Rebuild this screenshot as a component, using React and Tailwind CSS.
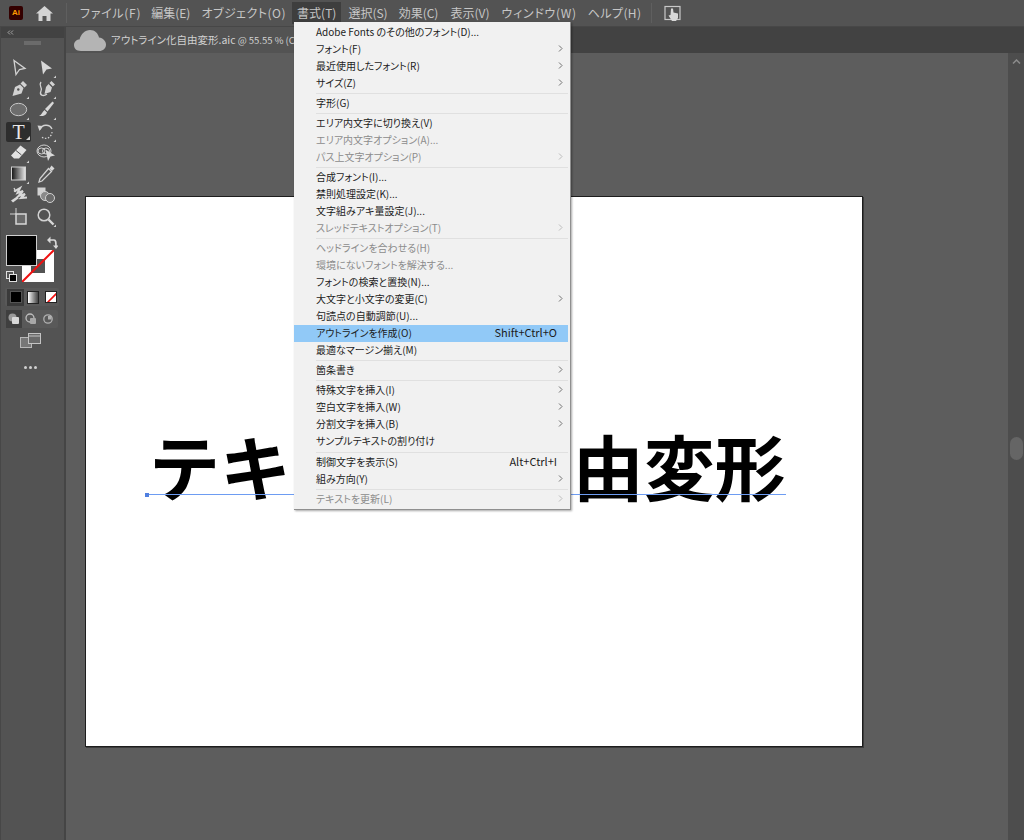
const FONT = '"Noto Sans CJK JP", "Noto Sans", sans-serif';

const topMenus = [
  ["ファイル(F)", "ml-[13px] tracking-[0.7px]"],
  ["編集(E)", "ml-[10px]"],
  ["オブジェクト(O)", "ml-[11px] tracking-[0.5px]"],
];
const topMenus2 = [
  ["選択(S)", "ml-[7px]"],
  ["効果(C)", "ml-[11px]"],
  ["表示(V)", "ml-[12px]"],
  ["ウィンドウ(W)", "ml-[12px] tracking-[0.7px]"],
  ["ヘルプ(H)", "ml-[11px] tracking-[0.4px]"],
];

const menu = [
  { t: "Adobe Fonts のその他のフォント(D)..." },
  { t: "フォント(F)", sub: 1 },
  { t: "最近使用したフォント(R)", sub: 1 },
  { t: "サイズ(Z)", sub: 1 },
  { sep: 1 },
  { t: "字形(G)" },
  { sep: 1 },
  { t: "エリア内文字に切り換え(V)" },
  { t: "エリア内文字オプション(A)...", off: 1 },
  { t: "パス上文字オプション(P)", off: 1, sub: 1 },
  { sep: 1 },
  { t: "合成フォント(I)..." },
  { t: "禁則処理設定(K)..." },
  { t: "文字組みアキ量設定(J)..." },
  { t: "スレッドテキストオプション(T)", off: 1, sub: 1 },
  { sep: 1 },
  { t: "ヘッドラインを合わせる(H)", off: 1 },
  { t: "環境にないフォントを解決する...", off: 1 },
  { t: "フォントの検索と置換(N)..." },
  { t: "大文字と小文字の変更(C)", sub: 1 },
  { t: "句読点の自動調節(U)..." },
  { t: "アウトラインを作成(O)", key: "Shift+Ctrl+O", hi: 1 },
  { t: "最適なマージン揃え(M)" },
  { sep: 1 },
  { t: "箇条書き", sub: 1 },
  { sep: 1 },
  { t: "特殊文字を挿入(I)", sub: 1 },
  { t: "空白文字を挿入(W)", sub: 1 },
  { t: "分割文字を挿入(B)", sub: 1 },
  { t: "サンプルテキストの割り付け" },
  { sep: 2 },
  { t: "制御文字を表示(S)", key: "Alt+Ctrl+I" },
  { t: "組み方向(Y)", sub: 1 },
  { sep: 1 },
  { t: "テキストを更新(L)", off: 1, sub: 1 },
];

function Corner() {
  return <path d="M20 17.5V20H17.5Z" fill="#d0d0d0" />;
}

const S = { stroke: "#d2d2d2", strokeWidth: 1.3, fill: "none" };

const tools = [
  <>
    <path d="M5 2.5 16 10.5 10.5 11.5 7 16.5Z" {...S} />
  </>,
  <>
    <path d="M5 2.5 16 10.5 10.5 11.5 7 16.5Z" fill="#d8d8d8" />
    <Corner />
  </>,
  <>
    <path d="M14 2 18 6 15.5 8.5 11.5 4.5Z M11 5.5 14.5 9 12.5 14.5 3.5 17 6 8Z" fill="#d2d2d2" />
    <circle cx="9.3" cy="10.5" r="1.2" fill="#535353" />
    <Corner />
  </>,
  <>
    <path d="M15.5 2 19 5.5 16.8 7.5 13.5 4Z M12.5 5 16 8.5 14.5 13 8.5 15 10 8Z" fill="#d2d2d2" />
    <path d="M5 3C2 7 7 8 5 12S7 18 11 15" {...S} />
    <Corner />
  </>,
  <>
    <ellipse cx="9.5" cy="9.5" rx="8.2" ry="6.2" fill="#6d6d6d" stroke="#c8c8c8" strokeWidth="1" />
    <Corner />
  </>,
  <>
    <path d="M16.5 1.5 18 3 11.5 11.5 9 9Z" fill="#d8d8d8" />
    <path d="M8.5 10 11 12.5C10 15.5 7 16.5 3 16 5.5 15 6 12 8.5 10Z" fill="#d8d8d8" />
    <Corner />
  </>,
  null,
  <>
    <path d="M4 7.5A6.5 6.5 0 0 1 16 7" {...S} />
    <path d="M16 10A6.5 6.5 0 0 1 5 14.5" stroke="#d2d2d2" strokeWidth="1.2" strokeDasharray="1.5 1.5" fill="none" />
    <path d="M1.5 3.5 7 4 3.5 9Z" fill="#d2d2d2" />
    <Corner />
  </>,
  <>
    <path d="M11.5 2.5 17.5 7 10 15.5 5 15.5 2 12.5Z" fill="#e2e2e2" />
    <path d="M7 7.5 12.5 12" stroke="#535353" strokeWidth="1" />
    <Corner />
  </>,
  <>
    <ellipse cx="8" cy="8" rx="7" ry="6" {...S} strokeWidth="1" />
    <ellipse cx="5.5" cy="8" rx="3.5" ry="3" {...S} strokeWidth="1" />
    <ellipse cx="10" cy="8" rx="3.5" ry="3" {...S} strokeWidth="1" />
    <path d="M9.5 6.5 19 12.5 14.5 13.5 12 18Z" fill="#d8d8d8" />
  </>,
  <>
    <defs>
      <linearGradient id="grd">
        <stop offset="0" stopColor="#111" />
        <stop offset="1" stopColor="#e8e8e8" />
      </linearGradient>
    </defs>
    <rect x="2.5" y="3" width="14" height="13" fill="url(#grd)" stroke="#d0d0d0" strokeWidth="1" />
    <Corner />
  </>,
  <>
    <path d="M15.5 1.5 18.5 4.5 16 7 13.5 4.5Z" fill="#d8d8d8" />
    <path d="M12.5 4.5 15.5 7.5 6 17 3 18 4 14.5Z" {...S} />
  </>,
  <>
    <path d="M5 6.5 11 3 8.5 8 14 6 9.5 11 16 9 12 13 18 12.5" stroke="#d8d8d8" strokeWidth="2" fill="none" />
    <path d="M2 15.5 8 11.5 10 13 4 17.5Z" fill="#d8d8d8" />
    <path d="M5 3 7 7" stroke="#d8d8d8" strokeWidth="1.2" />
  </>,
  <>
    <rect x="1.5" y="2.5" width="8" height="8" fill="#d2d2d2" />
    <circle cx="9" cy="11" r="4.5" fill="#8a8a8a" stroke="#d2d2d2" strokeWidth="1" />
    <circle cx="14" cy="13" r="4.5" fill="#6a6a6a" stroke="#d2d2d2" strokeWidth="1" />
  </>,
  <>
    <rect x="7" y="7" width="10" height="10" fill="#6a6a6a" stroke="#d8d8d8" strokeWidth="1.5" />
    <path d="M7 1V7H1" stroke="#d2d2d2" strokeWidth="1" fill="none" />
  </>,
  <>
    <circle cx="8" cy="8" r="5.8" {...S} strokeWidth="1.5" />
    <path d="M12.5 12.5 17.5 17.5" stroke="#d8d8d8" strokeWidth="2.4" />
    <Corner />
  </>,
];

function ToolIcon({ children }) {
  return (
    <svg width="20" height="20" viewBox="0 0 20 20" className="block">
      {children}
    </svg>
  );
}

function Toolbar() {
  return (
    <aside className="w-[66px] shrink-0 flex flex-col bg-[#535353] border-r-2 border-[#454545] border-l border-l-[#474747]">
      <div className="h-[11px] bg-[#424242] flex items-center pl-[6px]">
        <svg width="7" height="5" viewBox="0 0 7 5">
          <path d="M3 .5 1 2.5 3 4.5M6 .5 4 2.5 6 4.5" stroke="#bdbdbd" strokeWidth=".8" fill="none" />
        </svg>
      </div>
      <div className="h-[8px] mt-[3px] flex justify-center">
        <div className="w-[17px] h-[4px] bg-[#6b6b6b]" />
      </div>
      <div className="grid grid-cols-[27px_27px] auto-rows-[21.3px] mt-[8px] ml-[4px]">
        {tools.map((icon, i) =>
          icon ? (
            <div key={i} className="flex items-center justify-center">
              <ToolIcon>{icon}</ToolIcon>
            </div>
          ) : (
            <div key={i} className="relative flex items-center justify-center">
              <div className="w-[25px] h-[20px] bg-[#2d2d2d] rounded-[2px] flex items-center justify-center">
                <span className="text-[#e8e8e8] text-[20px] font-normal leading-none font-['Liberation_Serif',serif]">T</span>
                <svg width="4" height="4" viewBox="0 0 4 4" className="absolute right-[2px] bottom-[2px]">
                  <path d="M4 0V4H0Z" fill="#d0d0d0" />
                </svg>
              </div>
            </div>
          )
        )}
      </div>
      <div className="relative h-[50px] mt-[8px] ml-[5px] shrink-0">
        <svg width="12" height="14" viewBox="0 0 12 14" className="absolute left-[40px] top-[0px]">
          <path d="M2 5H8C10 5 10 7 10 12" stroke="#d8d8d8" strokeWidth="1.6" fill="none" />
          <path d="M4.5 1.5 1 5 4.5 8.5ZM7 10.5 10 14 12.5 10.5Z" fill="#d8d8d8" />
        </svg>
        <div className="absolute left-[16px] top-[15px] w-[32px] h-[32px] bg-white flex items-center justify-center">
          <div className="w-[14px] h-[14px] bg-[#535353]" />
          <svg width="32" height="32" viewBox="0 0 32 32" className="absolute inset-0">
            <path d="M0 32 32 0" stroke="#f01010" strokeWidth="2" />
          </svg>
        </div>
        <div className="absolute left-0 top-0 w-[31px] h-[31px] bg-black border border-[#cfcfcf]" />
        <svg width="12" height="12" viewBox="0 0 12 12" className="absolute left-0 top-[36px]">
          <rect x=".5" y=".5" width="7" height="7" fill="#555" stroke="#e0e0e0" />
          <rect x="3.5" y="3.5" width="7" height="7" fill="#000" stroke="#e0e0e0" />
        </svg>
      </div>
      <div className="flex items-center h-[18px] mt-[3px] ml-[4px] w-[54px] bg-[#595959] rounded-[2px]">
        <div className="w-[17px] h-[17px] ml-[2px] bg-[#3a3a3a] flex items-center justify-center">
          <div className="w-[12px] h-[12px] bg-black border border-[#555]" />
        </div>
        <div className="w-[12px] h-[13px] ml-[3px] border border-[#222] bg-gradient-to-r from-white to-[#444]" />
        <div className="w-[12px] h-[12px] ml-[6px] bg-white border border-[#222] relative overflow-hidden">
          <svg width="12" height="12" viewBox="0 0 12 12" className="absolute inset-0">
            <path d="M0 12 12 0" stroke="#f01010" strokeWidth="1.6" />
          </svg>
        </div>
      </div>
      <div className="flex items-center h-[18px] mt-[4px] ml-[5px] w-[52px] bg-[#595959] rounded-[2px]">
        <div className="w-[16px] h-[18px] bg-[#3f3f3f] flex items-center justify-center">
          <svg width="14" height="14" viewBox="0 0 14 14">
            <circle cx="5.5" cy="5.5" r="4" fill="#9a9a9a" />
            <rect x="5" y="5" width="7" height="7" rx="1" fill="#d8d8d8" />
          </svg>
        </div>
        <div className="w-[17px] flex justify-center">
          <svg width="14" height="14" viewBox="0 0 14 14">
            <circle cx="6" cy="6" r="4" fill="none" stroke="#bdbdbd" strokeWidth="1.3" />
            <rect x="6" y="6" width="6" height="6" rx="1" fill="#a8a8a8" />
          </svg>
        </div>
        <div className="w-[17px] flex justify-center">
          <svg width="12" height="12" viewBox="0 0 12 12">
            <circle cx="6" cy="6" r="4.2" fill="none" stroke="#b0b0b0" strokeWidth="1.3" />
            <rect x="6" y="3" width="3.5" height="3.5" fill="#b0b0b0" />
          </svg>
        </div>
      </div>
      <div className="flex justify-center mt-[5px] pr-[4px]">
        <svg width="21" height="15" viewBox="0 0 21 15">
          <rect x=".5" y="4.5" width="11" height="10" fill="#777" stroke="#b8b8b8" />
          <rect x="8.5" y=".5" width="12" height="10" fill="#6a6a6a" stroke="#c4c4c4" />
          <path d="M9 3H20" stroke="#c4c4c4" />
        </svg>
      </div>
      <div className="flex justify-center gap-[2px] mt-[18px] pr-[4px]">
        <span className="w-[3px] h-[3px] rounded-full bg-[#d0d0d0]" />
        <span className="w-[3px] h-[3px] rounded-full bg-[#d0d0d0]" />
        <span className="w-[3px] h-[3px] rounded-full bg-[#d0d0d0]" />
      </div>
    </aside>
  );
}

function Menu() {
  return (
    <div className="absolute left-[294px] top-[22px] w-[277px] h-[488px] pt-[2px] pr-[2px] bg-[#f1f1f1] border-r border-b border-[#8f8f8f] shadow-[1px_1px_2px_rgba(0,0,0,0.35)] z-10 [font-feature-settings:'palt']">
      {menu.map((m, i) =>
        m.sep ? (
          <div key={i} className={`ml-[22px] flex items-center ${m.sep === 2 ? "h-[4px]" : "h-[3px]"}`}>
            <div className="w-full h-px bg-[#e0e0e0]" />
          </div>
        ) : (
          <div
            key={i}
            className={`h-[17px] pb-[2px] flex items-center pl-[22px] pr-[11px] text-[10px] leading-none ${m.hi ? "bg-[#91c9f7]" : ""} ${m.off ? "text-[#8c8c8c]" : "text-[#1c1c1c]"}`}
          >
            <span className="flex-1 whitespace-nowrap">{m.t}</span>
            {m.key && <span className="whitespace-nowrap text-[11px]">{m.key}</span>}
            {m.sub && (
              <svg width="5" height="7" viewBox="0 0 5 7" className="mr-[-6px]">
                <path d="M1 .5 4 3.5 1 6.5" stroke={m.off ? "#bbbbbb" : "#707070"} strokeWidth="1" fill="none" />
              </svg>
            )}
          </div>
        )
      )}
    </div>
  );
}

export default function App() {
  return (
    <div className="relative w-[1024px] h-[840px] overflow-hidden flex flex-col bg-[#535353]" style={{ fontFamily: FONT }}>
      <header className="h-[27px] shrink-0 flex items-center bg-[#535353] border-b border-[#474747] text-[12px] text-[#c6c6c6] whitespace-nowrap [font-feature-settings:'palt']">
        <div className="ml-[9px] w-[14px] h-[14px] rounded-[2px] bg-[#330000] flex items-center justify-center text-[8px] font-bold text-[#ff9a00] leading-none font-['Liberation_Sans',sans-serif]">
          Ai
        </div>
        <svg width="17" height="15" viewBox="0 0 17 15" className="ml-[13px]">
          <path d="M8.5 0 17 7.5H14.5V15H10.5V10H6.5V15H2.5V7.5H0Z" fill="#d4d4d4" />
        </svg>
        <div className="w-px h-[20px] bg-[#5f5f5f] ml-[13px]" />
        {topMenus.map(([t, c]) => (
          <span key={t} className={c}>{t}</span>
        ))}
        <span className="ml-[6px] h-[22px] px-[5px] bg-[#3e3e3e] flex items-center">書式(T)</span>
        {topMenus2.map(([t, c]) => (
          <span key={t} className={c}>{t}</span>
        ))}
        <div className="w-px h-[20px] bg-[#5f5f5f] ml-[10px]" />
        <svg width="18" height="16" viewBox="0 0 18 16" className="ml-[12px]">
          <rect x="1" y="1.5" width="15" height="13" fill="none" stroke="#c8c8c8" strokeWidth="1.2" />
          <path d="M7 3.5 9 3.5 9.5 7.5 14 8.5 14 13 12 16H8L4.5 10.5 6.5 10Z" fill="#d8d8d8" />
        </svg>
      </header>
      <div className="flex-1 min-h-0 flex">
        <Toolbar />
        <div className="flex-1 min-w-0 flex flex-col">
          <div className="h-[26px] shrink-0 bg-[#424242] flex">
            <div className="w-[300px] flex items-center bg-[#535353] pl-[8px] text-[#d0d0d0] text-[10.5px] whitespace-nowrap overflow-hidden [font-feature-settings:'palt']">
              <svg width="32" height="21" viewBox="0 0 32 21" className="shrink-0">
                <path d="M7 21C2 21 0 18 0 15 0 11.5 3 9.5 5.5 9.5 7 4 11 0 16 0 21 0 24 3.5 25 7.5 29 8 32 11 32 14.5 32 18.5 29 21 25 21Z" fill="#b4b4b4" />
              </svg>
              <span className="ml-[5px]">
                アウトライン化自由変形.aic<span className="text-[9.5px]"> @ 55.55 % (CMYK/プレビュー)</span>
              </span>
            </div>
          </div>
          <div className="flex-1 min-h-0 flex">
            <main className="flex-1 min-w-0 bg-[#5d5d5d] pl-[19px] pt-[143px]">
              <div className="relative w-[778px] h-[551px] bg-white border border-[#1d1d1d] shadow-[1px_1px_0_rgba(0,0,0,0.35)] pl-[63px] pt-[217px]">
                <div className="text-[71px] leading-[100px] font-bold text-black whitespace-nowrap">テキストの自由変形</div>
                <div className="absolute left-[60px] top-[297px] w-[640px] h-px bg-[#6d9cf2]" />
                <div className="absolute left-[59px] top-[296px] w-[4px] h-[4px] bg-[#4f7fe0]" />
              </div>
            </main>
            <div className="w-[16px] shrink-0 bg-[#4d4d4d] flex flex-col items-center pt-[6px]">
              <svg width="9" height="5" viewBox="0 0 9 5">
                <path d="M1 4.5 4.5 1 8 4.5" stroke="#8c8c8c" strokeWidth="1.5" fill="none" />
              </svg>
              <div className="w-[13px] h-[23px] rounded-full bg-[#656565] mt-[373px]" />
            </div>
          </div>
        </div>
      </div>
      <Menu />
    </div>
  );
}
